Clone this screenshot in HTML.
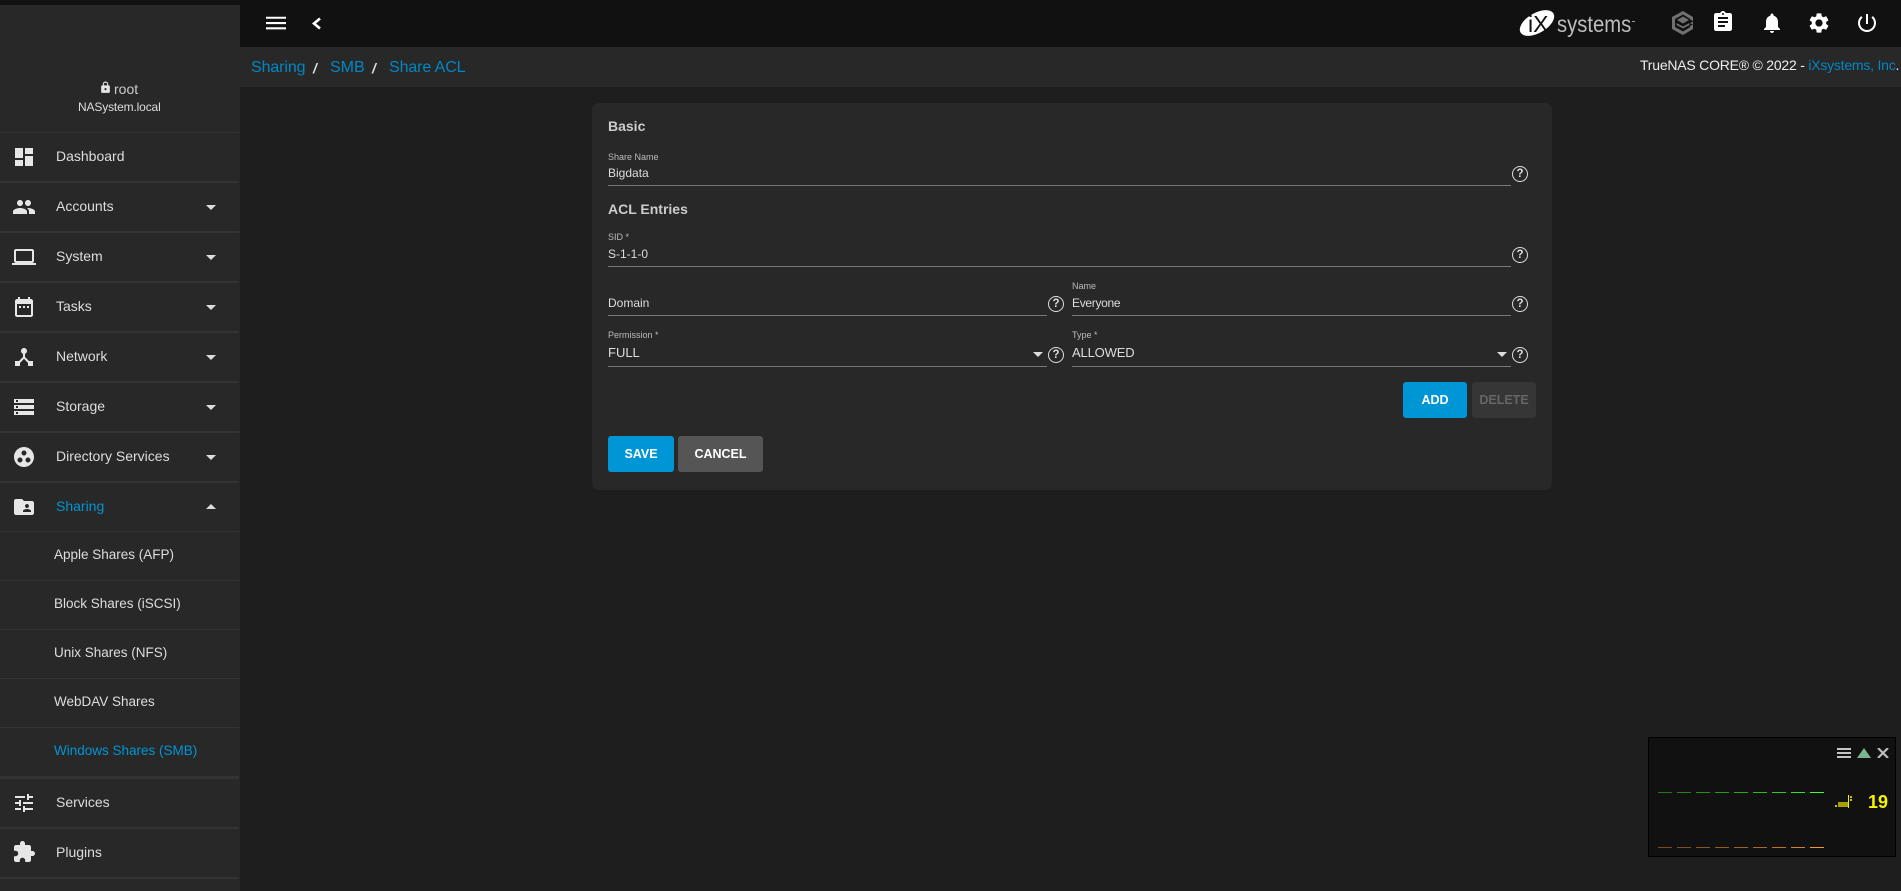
<!DOCTYPE html>
<html><head><meta charset="utf-8"><title>Share ACL</title>
<style>
html,body{margin:0;padding:0;width:1901px;height:891px;overflow:hidden;background:#1e1e1e;font-family:"Liberation Sans",Arial,sans-serif;color:#ddd}
.a{position:absolute}
.t{position:absolute;line-height:20px;white-space:nowrap;font-size:14px}
.b{position:absolute;left:0;width:239px;background:#333}
svg{position:absolute;fill:#e6e6e6;display:block}
.l{position:absolute;height:1px;background:#777}
.s{font-size:9px;color:#bbb}
.v{font-size:12px;color:#ddd}
.h{font-weight:bold;font-size:14px;color:#ccc}
.arr{position:absolute;width:0;height:0;border-left:5px solid transparent;border-right:5px solid transparent;border-top:5px solid #ddd}
.btn{position:absolute;top:382px;height:36px;line-height:36px;text-align:center;font-size:12.5px;font-weight:bold;border-radius:3px;color:#fff;background:#0095d5}
.q{position:absolute;width:14px;height:14px;border:1.6px solid #ddd;border-radius:50%;font-size:11.5px;line-height:14px;text-align:center;font-weight:bold;color:#ddd}
.d{position:absolute;width:14px;height:1px}
.c{position:absolute;top:58px;font-size:16px;line-height:20px;color:#0087c4;white-space:nowrap}
.sl{position:absolute;top:58px;font-size:14px;line-height:20px;color:#ddd;font-style:italic;font-weight:bold}
</style></head><body>
<div class="a" style="left:0;top:0;width:1901px;height:47px;background:#111"></div>
<div class="a" style="left:0;top:5px;width:240px;height:886px;background:#282828"></div>
<div class="a" style="left:240px;top:47px;width:1661px;height:40px;background:#282828"></div>

<!-- sidebar -->
<svg style="left:99px;top:81px" width="13" height="13" viewBox="0 0 24 24"><path d="M18 8h-1V6c0-2.76-2.24-5-5-5S7 3.24 7 6v2H6c-1.1 0-2 .9-2 2v10c0 1.1.9 2 2 2h12c1.1 0 2-.9 2-2V10c0-1.1-.9-2-2-2zm-6 9c-1.1 0-2-.9-2-2s.9-2 2-2 2 .9 2 2-.9 2-2 2zm3.1-9H8.9V6c0-1.71 1.39-3.1 3.1-3.1 1.71 0 3.1 1.39 3.1 3.1v2z"/></svg>
<div class="t" style="left:114px;top:79px;color:#ccc">root</div>
<div class="t" style="left:78px;top:97px;font-size:12px;letter-spacing:-.15px">NASystem.local</div>
<div class="b" style="top:132px;height:1px"></div>
<div class="b" style="top:181px;height:2px"></div>
<div class="b" style="top:231px;height:2px"></div>
<div class="b" style="top:281px;height:2px"></div>
<div class="b" style="top:331px;height:2px"></div>
<div class="b" style="top:381px;height:2px"></div>
<div class="b" style="top:431px;height:2px"></div>
<div class="b" style="top:481px;height:2px"></div>
<div class="b" style="top:531px;height:1px"></div>
<div class="b" style="top:580px;height:1px"></div>
<div class="b" style="top:629px;height:1px"></div>
<div class="b" style="top:678px;height:1px"></div>
<div class="b" style="top:727px;height:1px"></div>
<div class="b" style="top:776px;height:3px"></div>
<div class="b" style="top:827px;height:2px"></div>
<div class="b" style="top:877px;height:2px"></div>

<svg style="left:12px;top:145px" width="24" height="24" viewBox="0 0 24 24"><path d="M3 13h8V3H3v10zm0 8h8v-6H3v6zm10 0h8V11h-8v10zm0-18v6h8V3h-8z"/></svg>
<svg style="left:12px;top:195px" width="24" height="24" viewBox="0 0 24 24"><path d="M16 11c1.66 0 2.99-1.34 2.99-3S17.66 5 16 5c-1.66 0-3 1.34-3 3s1.34 3 3 3zm-8 0c1.66 0 2.99-1.34 2.99-3S9.66 5 8 5C6.34 5 5 6.34 5 8s1.34 3 3 3zm0 2c-2.33 0-7 1.17-7 3.5V19h14v-2.5c0-2.33-4.67-3.5-7-3.5zm8 0c-.29 0-.62.02-.97.05 1.16.84 1.97 1.97 1.97 3.45V19h6v-2.5c0-2.33-4.67-3.5-7-3.5z"/></svg>
<svg style="left:12px;top:245px" width="24" height="24" viewBox="0 0 24 24"><path d="M20 18c1.1 0 1.99-.9 1.99-2L22 6c0-1.1-.9-2-2-2H4c-1.1 0-2 .9-2 2v10c0 1.1.9 2 2 2H0v2h24v-2h-4zM4 6h16v10H4V6z"/></svg>
<svg style="left:12px;top:295px" width="24" height="24" viewBox="0 0 24 24"><path d="M9 11H7v2h2v-2zm4 0h-2v2h2v-2zm4 0h-2v2h2v-2zm2-7h-1V2h-2v2H8V2H6v2H5c-1.11 0-1.99.9-1.99 2L3 20c0 1.1.89 2 2 2h14c1.1 0 2-.9 2-2V6c0-1.1-.9-2-2-2zm0 16H5V9h14v11z"/></svg>
<svg style="left:12px;top:345px" width="24" height="24" viewBox="0 0 24 24"><path d="M17 16l-4-4V8.82C14.16 8.4 15 7.3 15 6c0-1.66-1.34-3-3-3S9 4.34 9 6c0 1.3.84 2.4 2 2.82V12l-4 4H3v5h5v-3.05l4-4.2 4 4.2V21h5v-5h-4z"/></svg>
<svg style="left:12px;top:395px" width="24" height="24" viewBox="0 0 24 24"><path d="M2 20h20v-4H2v4zm2-3h2v2H4v-2zM2 4v4h20V4H2zm4 3H4V5h2v2zm-4 7h20v-4H2v4zm2-3h2v2H4v-2z"/></svg>
<svg style="left:12px;top:445px" width="24" height="24" viewBox="0 0 24 24"><path d="M12 2C6.48 2 2 6.48 2 12s4.48 10 10 10 10-4.48 10-10S17.52 2 12 2zM8 17.5c-1.38 0-2.5-1.12-2.5-2.5s1.12-2.5 2.5-2.5 2.5 1.12 2.5 2.5-1.12 2.5-2.5 2.5zM9.5 8c0-1.38 1.12-2.5 2.5-2.5s2.5 1.12 2.5 2.5-1.12 2.5-2.5 2.5S9.5 9.38 9.5 8zm6.5 9.5c-1.38 0-2.5-1.12-2.5-2.5s1.12-2.5 2.5-2.5 2.5 1.12 2.5 2.5-1.12 2.5-2.5 2.5z"/></svg>
<svg style="left:12px;top:495px" width="24" height="24" viewBox="0 0 24 24"><path d="M20 6h-8l-2-2H4c-1.1 0-1.99.9-1.99 2L2 18c0 1.1.9 2 2 2h16c1.1 0 2-.9 2-2V8c0-1.1-.9-2-2-2zm-5 3c1.1 0 2 .9 2 2s-.9 2-2 2-2-.9-2-2 .9-2 2-2zm4 8h-8v-1c0-1.33 2.67-2 4-2s4 .67 4 2v1z"/></svg>
<svg style="left:12px;top:791px" width="24" height="24" viewBox="0 0 24 24"><path d="M3 17v2h6v-2H3zM3 5v2h10V5H3zm10 16v-2h8v-2h-8v-2h-2v6h2zM7 9v2H3v2h4v2h2V9H7zm14 4v-2H11v2h10zm-6-4h2V7h4V5h-4V3h-2v6z"/></svg>
<svg style="left:12px;top:840px" width="24" height="24" viewBox="0 0 24 24"><path d="M20.5 11H19V7c0-1.1-.9-2-2-2h-4V3.5C13 2.12 11.88 1 10.5 1S8 2.12 8 3.5V5H4c-1.1 0-1.99.9-1.99 2v3.8H3.5c1.49 0 2.7 1.21 2.7 2.7s-1.21 2.7-2.7 2.7H2V20c0 1.1.9 2 2 2h3.8v-1.5c0-1.49 1.21-2.7 2.7-2.7 1.49 0 2.7 1.21 2.7 2.7V22H17c1.1 0 2-.9 2-2v-4h1.5c1.38 0 2.5-1.12 2.5-2.5S21.88 11 20.5 11z"/></svg>

<div class="t" style="left:56px;top:146px">Dashboard</div>
<div class="t" style="left:56px;top:196px">Accounts</div>
<div class="t" style="left:56px;top:246px">System</div>
<div class="t" style="left:56px;top:296px">Tasks</div>
<div class="t" style="left:56px;top:346px">Network</div>
<div class="t" style="left:56px;top:396px">Storage</div>
<div class="t" style="left:56px;top:446px">Directory Services</div>
<div class="t" style="left:56px;top:496px;color:#0095d5">Sharing</div>
<div class="t" style="left:54px;top:545px;font-size:13.5px">Apple Shares (AFP)</div>
<div class="t" style="left:54px;top:594px;font-size:13.5px">Block Shares (iSCSI)</div>
<div class="t" style="left:54px;top:643px;font-size:13.5px">Unix Shares (NFS)</div>
<div class="t" style="left:54px;top:692px;font-size:13.5px">WebDAV Shares</div>
<div class="t" style="left:54px;top:741px;font-size:13.5px;color:#0095d5">Windows Shares (SMB)</div>
<div class="t" style="left:56px;top:792px">Services</div>
<div class="t" style="left:56px;top:842px">Plugins</div>
<div class="arr" style="left:206px;top:205px"></div>
<div class="arr" style="left:206px;top:255px"></div>
<div class="arr" style="left:206px;top:305px"></div>
<div class="arr" style="left:206px;top:355px"></div>
<div class="arr" style="left:206px;top:405px"></div>
<div class="arr" style="left:206px;top:455px"></div>
<div class="arr" style="left:206px;top:504px;border-top:0;border-bottom:5px solid #ddd"></div>

<!-- top bar -->
<svg style="left:266px;top:16px" width="20" height="14" viewBox="0 0 20 14"><path d="M0 .7h20v2.100H0zM0 6h20v2.100H0zM0 11.300h20v2.100H0z" fill="#fff"/></svg>
<svg style="left:311px;top:17px" width="11" height="13" viewBox="0 0 11 13"><path d="M9 1.500L3 6.500l6 5" stroke="#fff" stroke-width="2.600" fill="none"/></svg>
<div class="c" style="left:251px;letter-spacing:-.1px">Sharing</div>
<div class="sl" style="left:313px">/</div>
<div class="c" style="left:330px">SMB</div>
<div class="sl" style="left:372px">/</div>
<div class="c" style="left:389px;letter-spacing:-.1px">Share ACL</div>
<div class="t" style="left:1640px;top:55px;font-size:14px;color:#eee;letter-spacing:-.22px">TrueNAS CORE® © 2022 - <span style="color:#0087c4">iXsystems, Inc</span>.</div>

<svg style="left:1519px;top:9px" width="37" height="28" viewBox="0 0 37 28"><ellipse cx="18" cy="14" rx="19" ry="10" transform="rotate(-30 18 14)" style="fill:#fff"/><text x="9" y="23" font-family="Liberation Sans" font-size="23" style="fill:#111">iX</text></svg>
<div class="t" style="left:1557px;top:14px;font-size:23px;color:#bdbdbd;transform:scaleX(.88);transform-origin:0 0">systems</div>
<div class="a" style="left:1632px;top:21px;width:3px;height:1px;background:#999"></div>

<svg style="left:1672px;top:11px" width="22" height="24" viewBox="0 0 22 24"><path d="M11 0l10 6v4l-3-1.500V7.700L11 3.500 3 8v8l8 4.500 7-4.200V15l3-1.500V18l-10 6L0 18V6z" style="fill:#707070"/><path d="M11 5.500l6 3.500-6 3.500L5 9z" style="fill:#707070"/><path d="M4.500 12l6.500 3.500L17.500 12v2l-6.500 3.500L4.500 14z" style="fill:#707070"/><path d="M21 10.500l-3 1.500 3 1.500z" style="fill:#707070"/></svg>
<svg style="left:1711px;top:10px;fill:#fff" width="24" height="24" viewBox="0 0 24 24"><path d="M19 3h-4.180C14.400 1.840 13.300 1 12 1c-1.300 0-2.400.84-2.820 2H5c-1.100 0-2 .9-2 2v14c0 1.100.9 2 2 2h14c1.100 0 2-.9 2-2V5c0-1.100-.9-2-2-2zm-7 0c.55 0 1 .45 1 1s-.45 1-1 1-1-.45-1-1 .45-1 1-1zm2 14H7v-2h7v2zm3-4H7v-2h10v2zm0-4H7V7h10v2z"/></svg>
<svg style="left:1760px;top:11px;fill:#fff" width="24" height="24" viewBox="0 0 24 24"><path d="M12 22c1.100 0 2-.9 2-2h-4c0 1.100.89 2 2 2zm6-6v-5c0-3.070-1.640-5.640-4.500-6.320V4c0-.83-.67-1.500-1.500-1.500s-1.500.67-1.500 1.500v.68C7.630 5.360 6 7.920 6 11v5l-2 2v1h16v-1l-2-2z"/></svg>
<svg style="left:1807px;top:11px;fill:#fff" width="24" height="24" viewBox="0 0 24 24"><path d="M19.14 12.94c.04-.3.06-.61.06-.94 0-.32-.02-.64-.07-.94l2.030-1.580c.18-.14.23-.41.12-.61l-1.920-3.320c-.12-.22-.37-.29-.59-.22l-2.390.96c-.5-.38-1.030-.7-1.620-.94l-.36-2.540c-.04-.24-.24-.41-.48-.41h-3.840c-.24 0-.43.17-.47.41l-.36 2.540c-.59.24-1.130.57-1.620.94l-2.390-.96c-.22-.08-.47 0-.59.22L2.740 8.870c-.12.21-.08.47.12.61l2.030 1.580c-.05.3-.09.63-.09.94s.02.64.07.94l-2.030 1.580c-.18.14-.23.41-.12.61l1.920 3.320c.12.22.37.29.59.22l2.390-.96c.5.38 1.030.7 1.620.94l.36 2.540c.05.24.24.41.48.41h3.840c.24 0 .44-.17.47-.41l.36-2.540c.59-.24 1.130-.56 1.620-.94l2.390.96c.22.08.47 0 .59-.22l1.920-3.320c.12-.22.07-.47-.12-.61l-2.010-1.580zM12 15.600c-1.980 0-3.600-1.620-3.600-3.600s1.620-3.600 3.600-3.600 3.600 1.620 3.600 3.600-1.620 3.600-3.600 3.600z"/></svg>
<svg style="left:1855px;top:11px;fill:#fff" width="24" height="24" viewBox="0 0 24 24"><path d="M13 3h-2v10h2V3zm4.830 2.170l-1.420 1.420C17.990 7.860 19 9.810 19 12c0 3.870-3.130 7-7 7s-7-3.130-7-7c0-2.190 1.010-4.140 2.580-5.420L6.170 5.170C4.230 6.820 3 9.260 3 12c0 4.970 4.030 9 9 9s9-4.030 9-9c0-2.740-1.230-5.180-3.170-6.830z"/></svg>

<!-- card -->
<div class="a" style="left:592px;top:103px;width:960px;height:387px;background:#282828;border-radius:7px"></div>
<div class="t h" style="left:608px;top:116px">Basic</div>
<div class="t s" style="left:608px;top:147px">Share Name</div>
<div class="t v" style="left:608px;top:163px">Bigdata</div>
<div class="l" style="left:608px;top:185px;width:903px"></div>
<div class="q" style="left:1512px;top:166px">?</div>
<div class="t h" style="left:608px;top:199px">ACL Entries</div>
<div class="t s" style="left:608px;top:227px">SID *</div>
<div class="t v" style="left:608px;top:244px">S-1-1-0</div>
<div class="l" style="left:608px;top:266px;width:903px"></div>
<div class="q" style="left:1512px;top:247px">?</div>
<div class="t v" style="left:608px;top:293px">Domain</div>
<div class="l" style="left:608px;top:315px;width:439px"></div>
<div class="q" style="left:1048px;top:296px">?</div>
<div class="t s" style="left:1072px;top:276px">Name</div>
<div class="t v" style="left:1072px;top:293px;letter-spacing:-.3px">Everyone</div>
<div class="l" style="left:1072px;top:315px;width:439px"></div>
<div class="q" style="left:1512px;top:296px">?</div>
<div class="t s" style="left:608px;top:325px">Permission *</div>
<div class="t" style="left:608px;top:343px;font-size:13px;color:#ddd">FULL</div>
<div class="l" style="left:608px;top:366px;width:439px"></div>
<div class="arr" style="left:1033px;top:352px"></div>
<div class="q" style="left:1048px;top:347px">?</div>
<div class="t s" style="left:1072px;top:325px">Type *</div>
<div class="t" style="left:1072px;top:343px;font-size:13px;color:#ddd;letter-spacing:-.15px">ALLOWED</div>
<div class="l" style="left:1072px;top:366px;width:439px"></div>
<div class="arr" style="left:1497px;top:352px"></div>
<div class="q" style="left:1512px;top:347px">?</div>
<div class="btn" style="left:1403px;width:64px">ADD</div>
<div class="btn" style="left:1472px;width:64px;background:#363636;color:#666">DELETE</div>
<div class="btn" style="left:608px;top:436px;width:66px">SAVE</div>
<div class="btn" style="left:678px;top:436px;width:85px;background:#555">CANCEL</div>

<!-- widget -->
<div class="a" style="left:1648px;top:737px;width:246px;height:118px;background:#111;border:1px solid #000"></div>
<svg style="left:1837px;top:748px" width="52" height="10" viewBox="0 0 52 10"><path d="M0 0h14v2H0zM0 4h14v2H0zM0 8h14v2H0z" style="fill:#c4c4c4"/><path d="M20 10L27 0l7 10z" style="fill:#7ab58f"/><path d="M41 0l10 10M51 0L41 10" stroke="#bbb" stroke-width="2.200" fill="none"/></svg>
<div class="d" style="left:1658px;top:792px;background:#1f7a1a"></div>
<div class="d" style="left:1677px;top:792px;background:#208419"></div>
<div class="d" style="left:1696px;top:792px;background:#22901a"></div>
<div class="d" style="left:1715px;top:792px;background:#249c1b"></div>
<div class="d" style="left:1734px;top:792px;background:#27aa1c"></div>
<div class="d" style="left:1753px;top:792px;background:#2aba1e"></div>
<div class="d" style="left:1772px;top:792px;background:#2ecc20"></div>
<div class="d" style="left:1791px;top:792px;background:#34e224"></div>
<div class="d" style="left:1810px;top:792px;background:#3fff2a"></div>
<div class="d" style="left:1658px;top:847px;background:#7a4a20"></div>
<div class="d" style="left:1677px;top:847px;background:#824e20"></div>
<div class="d" style="left:1696px;top:847px;background:#8c5420"></div>
<div class="d" style="left:1715px;top:847px;background:#985a20"></div>
<div class="d" style="left:1734px;top:847px;background:#a46020"></div>
<div class="d" style="left:1753px;top:847px;background:#b06820"></div>
<div class="d" style="left:1772px;top:847px;background:#c07222"></div>
<div class="d" style="left:1791px;top:847px;background:#d48024"></div>
<div class="d" style="left:1810px;top:847px;background:#f79a2a"></div>
<svg style="left:1835px;top:795px" width="18" height="14" viewBox="0 0 18 14"><path d="M0 10h2v2H0z" style="fill:#c8c000"/><path d="M3 7h10v5H3z" style="fill:#a8a000"/><path d="M13 0h1v13h-1z" style="fill:#f0f000"/><path d="M15 1h2v2h-2zM15 4h2v2h-2z" style="fill:#c8c000"/></svg>
<div class="t" style="left:1868px;top:792px;font-size:18px;font-weight:bold;color:#f5f500">19</div>
</body></html>
